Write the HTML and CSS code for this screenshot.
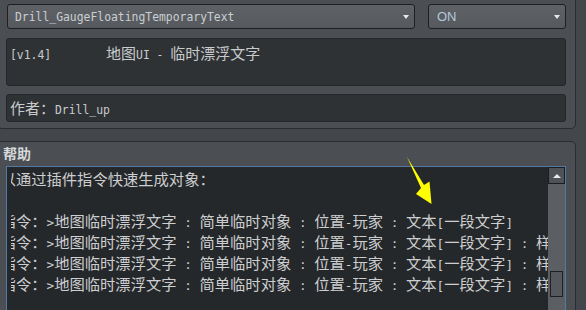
FILE: index.html
```html
<!DOCTYPE html>
<html lang="zh">
<head>
<meta charset="utf-8">
<title>Plugin</title>
<link rel="stylesheet" href="styles.css">
</head>
<body>
<div class="page">
  <section class="group group-top">
    <div class="labels">
      <span class="lbl lbl-plugin">插件</span>
      <span class="lbl lbl-state">状态</span>
    </div>
    <div class="combo-row">
      <div class="combo combo-name"><span class="combo-text m">Drill_GaugeFloatingTemporaryText</span><span class="caret"></span></div>
      <div class="combo combo-state"><span class="combo-text on">ON</span><span class="caret"></span></div>
    </div>
    <div class="field field-desc"><span class="m">[v1.4]        </span>地图<span class="m">UI - </span>临时漂浮文字</div>
    <div class="field field-author">作者：<span class="m">Drill_up</span></div>
  </section>
  <section class="group group-help">
    <div class="help-title">帮助</div>
    <div class="help-box">
      <div class="help-view">
        <div class="help-text">
          <div class="line">你可以通过插件指令快速生成对象：</div>
          <div class="line">&nbsp;</div>
          <div class="line">插件指令：<span class="a">&gt;</span>地图临时漂浮文字<span class="a"> : </span>简单临时对象<span class="a"> : </span>位置<span class="a">-</span>玩家<span class="a"> : </span>文本<span class="a">[</span>一段文字<span class="a">]</span></div>
          <div class="line">插件指令：<span class="a">&gt;</span>地图临时漂浮文字<span class="a"> : </span>简单临时对象<span class="a"> : </span>位置<span class="a">-</span>玩家<span class="a"> : </span>文本<span class="a">[</span>一段文字<span class="a">] : </span>样式<span class="a">[1]</span></div>
          <div class="line">插件指令：<span class="a">&gt;</span>地图临时漂浮文字<span class="a"> : </span>简单临时对象<span class="a"> : </span>位置<span class="a">-</span>玩家<span class="a"> : </span>文本<span class="a">[</span>一段文字<span class="a">] : </span>样式<span class="a">[2]</span></div>
          <div class="line">插件指令：<span class="a">&gt;</span>地图临时漂浮文字<span class="a"> : </span>简单临时对象<span class="a"> : </span>位置<span class="a">-</span>玩家<span class="a"> : </span>文本<span class="a">[</span>一段文字<span class="a">] : </span>样式<span class="a">[3]</span></div>
        </div>
      </div>
      <div class="scrollbar">
        <div class="sb-up"><span class="sb-arrow"></span></div>
        <div class="sb-track"><div class="sb-thumb"></div></div>
      </div>
    </div>
  </section>
  <svg class="arrow" width="586" height="310" viewBox="0 0 586 310" aria-hidden="true">
    <polygon points="407,157 424,185 429.5,181.5 431.5,204 416,194 421,188" fill="#ffff00"/>
  </svg>
</div>
</body>
</html>
```

FILE: styles.css
```css
* { box-sizing: border-box; }
html, body { margin: 0; padding: 0; }
body {
  width: 586px;
  height: 310px;
  overflow: hidden;
  background: #43464a;
  font-family: "Noto Sans CJK SC", "DejaVu Sans", sans-serif;
  color: #c8cacc;
}
.page {
  position: relative;
  width: 586px;
  height: 310px;
  overflow: hidden;
  display: flex;
  flex-direction: column;
}
.m {
  font-family: "DejaVu Sans Mono", monospace;
  font-size: 11.4px;
  white-space: pre;
}
.group {
  background: #4b4f53;
  border: 1px solid #2a2c2f;
  border-radius: 5px;
  margin-left: -3px;
  width: 579px;
  flex-shrink: 0;
}
.group-top {
  margin-top: -24px;
  padding: 0 9px 6px 8px;
}
.labels {
  height: 27px;
  display: flex;
  align-items: flex-end;
  padding-bottom: 4px;
  font-size: 12px;
  line-height: 14px;
  color: #a8abae;
}
.lbl-plugin { margin-left: 2px; }
.lbl-state { margin-left: 396px; }
.combo-row {
  display: flex;
  gap: 13px;
  margin-left: 1px;
}
.combo {
  height: 25px;
  border: 1px solid #1d1f21;
  border-radius: 3px;
  background: linear-gradient(#5e6266, #565a5e);
  display: flex;
  align-items: center;
  justify-content: space-between;
  padding: 0 5px 0 7px;
}
.combo-name { width: 408px; }
.combo-state { flex: 1; padding-left: 8px; padding-right: 5px; }
.combo-text { color: #cbced2; }
.on {
  font-family: "Liberation Sans", Arial, sans-serif;
  font-size: 13px;
  color: #b4c8dc;
}
.caret {
  width: 0;
  height: 0;
  border-left: 3.5px solid transparent;
  border-right: 3.5px solid transparent;
  border-top: 4px solid #e6e8ea;
  margin-top: 1px;
}
.field {
  background: #2f3235;
  border: 1px solid #242628;
  border-radius: 3px;
  font-size: 15px;
  color: #c8cacc;
  white-space: pre;
}
.field-desc {
  margin-top: 9px;
  height: 48px;
  padding: 4px 3px;
  line-height: 20px;
}
.field-author {
  margin-top: 8px;
  height: 28px;
  padding: 0 3px;
  line-height: 26px;
}
.group-help {
  margin-top: 12px;
  height: 200px;
  padding: 1px 9px 0 8px;
}
.help-title {
  font-size: 14px;
  font-weight: bold;
  line-height: 20px;
  margin-left: -3px;
  margin-bottom: 3px;
  color: #d6d8da;
}
.help-box {
  border: 1px solid #5279a3;
  background: #25282b;
  display: flex;
  height: 180px;
}
.help-view {
  flex: 1;
  overflow: hidden;
  margin-left: 4px;
  padding-top: 1px;
}
.help-text {
  margin-left: -41px;
  white-space: nowrap;
  font-size: 15.3px;
  line-height: 21px;
  color: #cdcecf;
}
.line { height: 21px; }
.a {
  font-family: "DejaVu Sans Mono", monospace;
  font-size: 12.7px;
  white-space: pre;
}
.scrollbar {
  width: 17px;
  display: flex;
  flex-direction: column;
  background: #5b5f63;
}
.sb-up {
  height: 17px;
  border: 1px solid #1b1d1f;
  background: #4f5357;
  display: flex;
  align-items: center;
  justify-content: center;
}
.sb-arrow {
  width: 0;
  height: 0;
  border-left: 4px solid transparent;
  border-right: 4px solid transparent;
  border-bottom: 4px solid #e8eaec;
}
.sb-track { flex: 1; }
.sb-thumb {
  margin-top: 87px;
  margin-left: 2px;
  width: 13px;
  height: 26px;
  border: 1px solid #1e2022;
  background: #55595d;
}
.arrow {
  position: absolute;
  left: 0;
  top: 0;
  pointer-events: none;
}
```
